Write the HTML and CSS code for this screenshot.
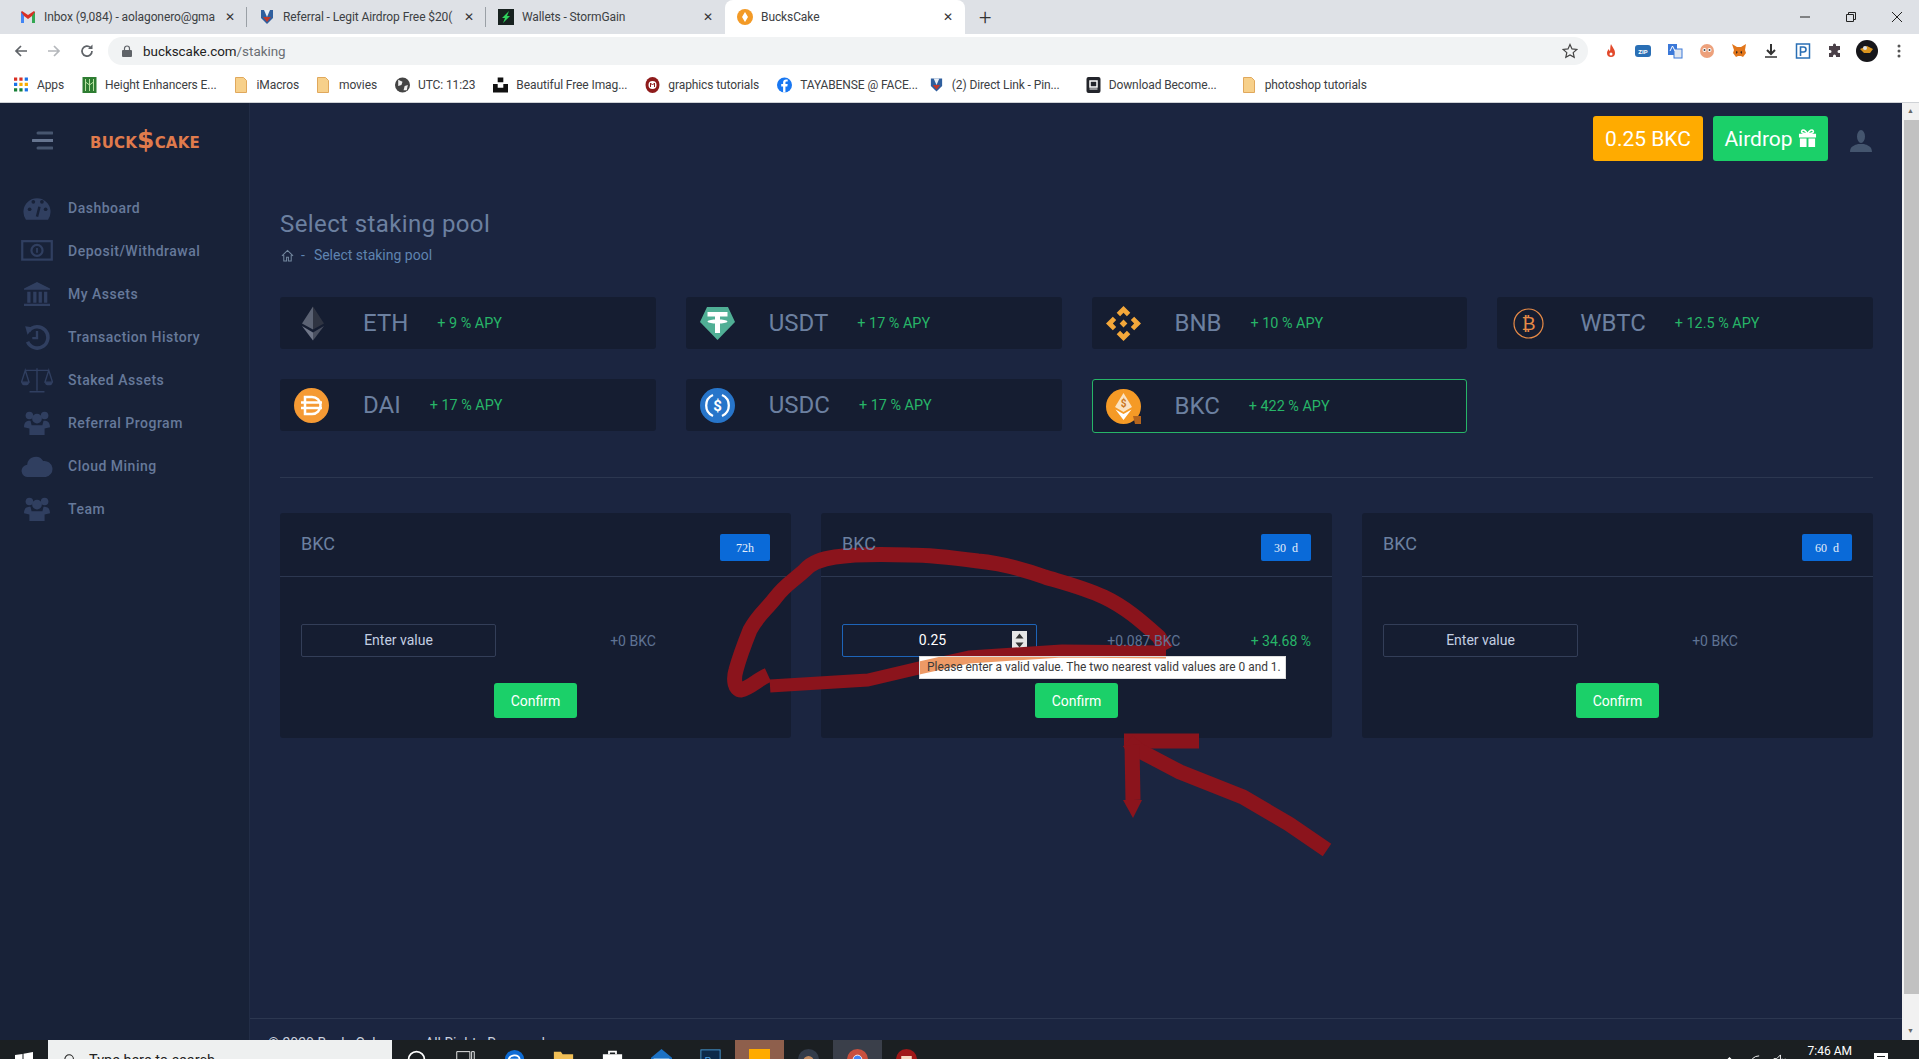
FILE: index.html
```html
<!DOCTYPE html>
<html lang="en">
<head>
    <meta charset="UTF-8">
    <title>BucksCake</title>
    <link rel="stylesheet" href="styles.css">
</head>
<body>
    <!-- browser tabs -->
    <div class="tabstrip">
        <div class="tab sep">
            <svg class="fav" viewBox="0 0 16 16"><path d="M1 3v11h3V7l4 3 4-3v7h3V3l-1-1-6 4-6-4z" fill="#d93025"/><path d="M1 3v11h3V7z" fill="#4285f4"/><path d="M12 7v7h3V3z" fill="#34a853"/></svg>
            <span class="tab-title">Inbox (9,084) - aolagonero@gma</span>
            <span class="tab-x">✕</span>
        </div>
        <div class="tab sep">
            <svg class="fav" viewBox="0 0 16 16"><path d="M2 1h12v8l-6 6-6-6z" fill="#2f5f9e"/><path d="M5 1h6L8 8z" fill="#e8eef5"/><path d="M4 8h8l-4 5z" fill="#c0392b"/></svg>
            <span class="tab-title">Referral - Legit Airdrop Free $20(</span>
            <span class="tab-x">✕</span>
        </div>
        <div class="tab">
            <svg class="fav" viewBox="0 0 16 16"><rect width="16" height="16" fill="#17211f"/><path d="M11 2 4 9h3l-2 5 7-7H9z" fill="#2fd35d"/></svg>
            <span class="tab-title">Wallets - StormGain</span>
            <span class="tab-x">✕</span>
        </div>
        <div class="tab active">
            <svg class="fav" viewBox="0 0 16 16"><circle cx="8" cy="8" r="8" fill="#f39a26"/><path d="M8 3 5 8l3 5 3-5z" fill="#fff"/></svg>
            <span class="tab-title">BucksCake</span>
            <span class="tab-x">✕</span>
        </div>
        <span class="newtab">+</span>
        <div class="winbtns">
            <svg viewBox="0 0 12 12"><path d="M1 6h10" stroke="#222" fill="none"/></svg>
            <svg viewBox="0 0 12 12"><path d="M1.500 3.500h7v7h-7zM3.500 3.500v-2h7v7h-2" stroke="#222" fill="none"/></svg>
            <svg viewBox="0 0 12 12"><path d="M1 1l10 10M11 1 1 11" stroke="#222" fill="none"/></svg>
        </div>
    </div>

    <!-- address bar -->
    <div class="toolbar">
        <svg class="navbtn" viewBox="0 0 16 16"><path d="M14 8H3M8 3 3 8l5 5" stroke="#5f6368" stroke-width="1.700" fill="none"/></svg>
        <svg class="navbtn" viewBox="0 0 16 16"><path d="M2 8h11M8 3l5 5-5 5" stroke="#b4b7bb" stroke-width="1.700" fill="none"/></svg>
        <svg class="navbtn" viewBox="0 0 16 16"><path d="M13 8a5 5 0 1 1-1.500-3.500" stroke="#5f6368" stroke-width="1.700" fill="none"/><path d="M13.500 1.500v4.500H9z" fill="#5f6368"/></svg>
        <div class="omnibox">
            <svg class="lock" viewBox="0 0 10 12"><path d="M2.500 5V3.500a2.500 2.500 0 0 1 5 0V5" stroke="#5f6368" fill="none" stroke-width="1.200"/><rect y="5" width="10" height="7" rx="1" fill="#5f6368"/></svg>
            <span class="url">buckscake.com<span class="url-path">/staking</span></span>
            <svg class="star" viewBox="0 0 16 16"><path d="m8 1.500 2 4.400 4.800.5-3.600 3.200 1 4.700L8 11.900l-4.200 2.400 1-4.700-3.600-3.200 4.800-.5z" stroke="#444" stroke-width="1.200" fill="none"/></svg>
        </div>
        <div class="exts">
            <svg viewBox="0 0 16 16"><path d="M8 1c1 3 4 5 4 9a4 4 0 0 1-8 0c0-2 1-3 2-4 0 1 .5 2 1 2 .5-2 0-4 1-7z" fill="#e2492b"/><circle cx="8" cy="11" r="1.500" fill="#fff"/></svg>
            <svg viewBox="0 0 16 16"><rect y="2" width="16" height="12" rx="3" fill="#2a6fb5"/><text x="8" y="10.500" class="ext-text">ZIP</text></svg>
            <svg viewBox="0 0 16 16"><rect x="1" y="1" width="9" height="11" fill="#3b78d8"/><rect x="7" y="6" width="8" height="9" fill="#dfe6f0" stroke="#3b78d8"/><path d="M3 8l2.500-5L8 8" stroke="#fff" fill="none"/></svg>
            <svg viewBox="0 0 16 16"><circle cx="8" cy="8" r="7" fill="#eda17c"/><circle cx="5.500" cy="7" r="2" fill="#fff"/><circle cx="10.500" cy="7" r="2" fill="#fff"/><circle cx="5.500" cy="7" r="1" fill="#444"/><circle cx="10.500" cy="7" r="1" fill="#444"/></svg>
            <svg viewBox="0 0 16 16"><path d="M1 1l5 3h4l5-3-1 6 1 3-3 4-2-1H7l-2 1-3-4 1-3z" fill="#e2761b"/><path d="M5 8l2 1-2 2zM11 8 9 9l2 2z" fill="#3a2a20"/></svg>
            <svg viewBox="0 0 16 16"><path d="M8 1v10M4 7l4 4 4-4" stroke="#333" stroke-width="2" fill="none"/><path d="M2 14h12" stroke="#333" stroke-width="1.500"/></svg>
            <svg viewBox="0 0 16 16"><rect x="1.500" y="1" width="13" height="14" fill="#fff" stroke="#2a6fb5" stroke-width="1.500"/><path d="M5.500 13V4h3a2 2 0 0 1 0 5h-3" stroke="#2a6fb5" stroke-width="1.600" fill="none"/></svg>
            <svg viewBox="0 0 16 16"><path d="M6 2a1.500 1.500 0 0 1 3 0v1h4v4h-1a1.500 1.500 0 0 0 0 3h1v4H9v-1a1.500 1.500 0 0 0-3 0v1H2v-4h1a1.500 1.500 0 0 0 0-3H2V3h4z" fill="#4a4048"/></svg>
            <svg class="avatar" viewBox="0 0 22 22"><circle cx="11" cy="11" r="11" fill="#16161a"/><path d="M4 9l7-3 6 3-3 4H8z" fill="#d9941f"/><circle cx="9" cy="8" r="2" fill="#dfe3e8"/></svg>
            <svg viewBox="0 0 16 16"><circle cx="8" cy="3" r="1.500" fill="#555"/><circle cx="8" cy="8" r="1.500" fill="#555"/><circle cx="8" cy="13" r="1.500" fill="#555"/></svg>
        </div>
    </div>

    <!-- bookmarks -->
    <div class="bookmarks">
        <div class="bm">
            <svg class="bm-ico" viewBox="0 0 14 14"><path d="M0 0h3v3H0zM5 0h3v3H5z" fill="#d93025"/><path d="M10 0h3v3h-3zM0 5h3v3H0z" fill="#1a73e8"/><path d="M5 5h3v3H5zM10 5h3v3h-3z" fill="#f9ab00"/><path d="M0 10h3v3H0zM5 10h3v3H5z" fill="#188038"/><path d="M10 10h3v3h-3z" fill="#1a73e8"/></svg>
            <span>Apps</span>
        </div>
        <div class="bm">
            <svg class="bm-ico" viewBox="0 0 14 16"><rect width="14" height="16" fill="#2e7d32"/><path d="M3 2v12M7 2v12M11 2v12M3 5l4 3 4-3" stroke="#b7e1a1" fill="none"/></svg>
            <span>Height Enhancers E...</span>
        </div>
        <div class="bm">
            <svg class="bm-folder" viewBox="0 0 12 16"><path d="M.500.500h8l3 3v12H.500z" fill="#f7d08a" stroke="#e0a85c"/></svg>
            <span>iMacros</span>
        </div>
        <div class="bm">
            <svg class="bm-folder" viewBox="0 0 12 16"><path d="M.500.500h8l3 3v12H.500z" fill="#f7d08a" stroke="#e0a85c"/></svg>
            <span>movies</span>
        </div>
        <div class="bm">
            <svg class="bm-ico" viewBox="0 0 14 14"><circle cx="7" cy="7" r="7" fill="#444"/><path d="M3 2l4 2-1 3-3 1zM9 8l3-1-1 5-3 0z" fill="#eee"/></svg>
            <span>UTC: 11:23</span>
        </div>
        <div class="bm">
            <svg class="bm-ico" viewBox="0 0 16 16"><path d="M5 0h6v5H5zM0 7h5v4h6V7h5v9H0z" fill="#111"/></svg>
            <span>Beautiful Free Imag...</span>
        </div>
        <div class="bm">
            <svg class="bm-ico" viewBox="0 0 14 16"><ellipse cx="7" cy="8" rx="7" ry="8" fill="#8e1b1b"/><circle cx="7" cy="8" r="4" fill="#fff"/><path d="M5 10V6l2 2 2-2v4" stroke="#8e1b1b" fill="none"/></svg>
            <span>graphics tutorials</span>
        </div>
        <div class="bm bm-fb">
            <svg class="bm-ico" viewBox="0 0 16 16"><circle cx="8" cy="8" r="8" fill="#1877f2"/><path d="M9 16V9.500h2l.4-2.500H9V5.500c0-.8.300-1.200 1.200-1.200h1.200V2.200C11 2.100 10.300 2 9.700 2 7.800 2 6.500 3.100 6.500 5.200V7H4.500v2.500h2V16z" fill="#fff"/></svg>
            <span>TAYABENSE @ FACE...</span>
        </div>
        <div class="bm bm-wide">
            <svg class="bm-ico" viewBox="0 0 16 16"><path d="M2 1h12v8l-6 6-6-6z" fill="#2f5f9e"/><path d="M5 1h6L8 8z" fill="#e8eef5"/><path d="M4 8h8l-4 5z" fill="#c0392b"/></svg>
            <span>(2) Direct Link - Pin...</span>
        </div>
        <div class="bm bm-wide">
            <svg class="bm-ico" viewBox="0 0 14 16"><rect width="14" height="16" rx="2" fill="#23252b"/><rect x="3.500" y="4" width="7" height="6" fill="none" stroke="#fff" stroke-width="1.500"/><path d="M3 12h8" stroke="#fff"/></svg>
            <span>Download Become...</span>
        </div>
        <div class="bm">
            <svg class="bm-folder" viewBox="0 0 12 16"><path d="M.500.500h8l3 3v12H.500z" fill="#f7d08a" stroke="#e0a85c"/></svg>
            <span>photoshop tutorials</span>
        </div>
    </div>

    <div class="page">
        <!-- left menu -->
        <aside class="sidebar">
            <div class="brand">
                <svg class="burger" viewBox="0 0 21 19"><path d="M6 2h14M6 17h14" stroke="#47566f" stroke-width="3" stroke-linecap="round"/><path d="M1 9.500h20" stroke="#66758f" stroke-width="3" stroke-linecap="round"/></svg>
                <div class="logo">BUCK<span class="logo-s">$</span>CAKE</div>
            </div>
            <nav class="menu">
                <a class="menu-item">
                    <svg viewBox="0 0 26 20"><path d="M4 19.500a11 11 0 1 1 18 0z" fill="#303f60"/><circle cx="7" cy="11" r="1.500" fill="#182238"/><circle cx="10" cy="5" r="1.500" fill="#182238"/><circle cx="17" cy="5" r="1.500" fill="#182238"/><circle cx="20" cy="11" r="1.500" fill="#182238"/><path d="M13 17l2-8" stroke="#182238" stroke-width="2"/></svg>
                    Dashboard
                </a>
                <a class="menu-item">
                    <svg viewBox="0 0 26 18"><rect x="1" y="1" width="24" height="15" fill="none" stroke="#303f60" stroke-width="1.800"/><circle cx="13" cy="8.500" r="4.500" fill="none" stroke="#303f60" stroke-width="1.800"/><path d="M13 6.500v4" stroke="#303f60" stroke-width="1.500"/></svg>
                    Deposit/Withdrawal
                </a>
                <a class="menu-item">
                    <svg viewBox="0 0 26 24"><path d="M13 1 25 7v1H1V7zM1 21h24v2H1zM4 10h3v10H4zM9.500 10h3v10h-3zM14.500 10h3v10h-3zM19.500 10h3v10h-3z" fill="#303f60"/></svg>
                    My Assets
                </a>
                <a class="menu-item">
                    <svg viewBox="0 0 22 22"><path d="M4 6a9 9 0 1 1-1 9" fill="none" stroke="#303f60" stroke-width="3"/><path d="M1 2l7 1-5 6z" fill="#303f60"/><path d="M11 6v6H7" fill="none" stroke="#303f60" stroke-width="2"/></svg>
                    Transaction History
                </a>
                <a class="menu-item">
                    <svg viewBox="0 0 30 24"><path d="M15 1v21M8 23h14M4 3h22M4 3 0.500 14h7zM26 3l-3.500 11h7z" fill="none" stroke="#303f60" stroke-width="1.300"/><path d="M0.500 14a3.500 3 0 0 0 7 0zM22.500 14a3.500 3 0 0 0 7 0z" fill="#303f60"/></svg>
                    Staked Assets
                </a>
                <a class="menu-item">
                    <svg viewBox="0 0 26 24"><circle cx="6" cy="5" r="3.500" fill="#303f60"/><circle cx="20" cy="5" r="3.500" fill="#303f60"/><circle cx="13" cy="8" r="4.500" fill="#303f60"/><path d="M1 16c0-6 4-6 6-6l1 4h10l1-4c2 0 6 0 6 6l-5 1v6H6v-6z" fill="#303f60"/></svg>
                    Referral Program
                </a>
                <a class="menu-item">
                    <svg viewBox="0 0 26 20"><path d="M6 19a5 5 0 0 1-1-10 7 7 0 0 1 13-3 6 6 0 0 1 2 13z" fill="#303f60"/></svg>
                    Cloud Mining
                </a>
                <a class="menu-item">
                    <svg viewBox="0 0 26 24"><circle cx="6" cy="5" r="3.500" fill="#303f60"/><circle cx="20" cy="5" r="3.500" fill="#303f60"/><circle cx="13" cy="8" r="4.500" fill="#303f60"/><path d="M1 16c0-6 4-6 6-6l1 4h10l1-4c2 0 6 0 6 6l-5 1v6H6v-6z" fill="#303f60"/></svg>
                    Team
                </a>
            </nav>
        </aside>

        <main class="main">
            <header class="topbar">
                <button class="btn-balance">0.25 BKC</button>
                <button class="btn-airdrop">Airdrop
                    <svg viewBox="0 0 20 20"><path d="M1 5h18v4H1zM2 10h7v9H2zM11 10h7v9h-7z" fill="#fff"/><path d="M10 5C8 1 5 0 4 2s2 3 6 3c4 0 7-1 6-3s-4-1-6 3z" fill="none" stroke="#fff" stroke-width="1.600"/></svg>
                </button>
                <svg class="user" viewBox="0 0 22 22"><ellipse cx="11" cy="6.500" rx="4" ry="6.500" fill="#44556e"/><path d="M0 22c0-6 5-7 8-8h6c3 1 8 2 8 8z" fill="#44556e"/></svg>
            </header>

            <div class="content">
                <h1 class="page-title">Select staking pool</h1>
                <div class="crumbs">
                    <svg viewBox="0 0 14 14"><path d="M1 7.500 7 1.500l6 6M3 6.500v6.500h3V9h2v4h3V6.500" fill="none" stroke="#74889f" stroke-width="1.100"/></svg>
                    <span class="crumb-dash">-</span>
                    <span>Select staking pool</span>
                </div>

                <div class="coins">
                    <div class="coin">
                        <div class="coin-ico">
                            <svg class="ico-eth" viewBox="0 0 22 34"><path d="M11 0 0 17l11 6z" fill="#5b6273"/><path d="M11 0l11 17-11 6z" fill="#2f3442"/><path d="M0 19.500 11 34V26z" fill="#6f7688"/><path d="M22 19.500 11 34V26z" fill="#4a5060"/></svg>
                        </div>
                        <span class="coin-name">ETH</span>
                        <span class="coin-apy">+ 9 % APY</span>
                    </div>
                    <div class="coin">
                        <div class="coin-ico">
                            <svg viewBox="0 0 35 33"><path d="M7 0h21l7 15-17.500 18L0 15z" fill="#50af95"/><path d="M7.500 5h20v4.500h-7.500v3c4 .2 7.500 1 7.500 2s-3.500 1.800-7.500 2V26h-5v-9.500c-4-.2-7.500-1-7.500-2s3.500-1.800 7.500-2v-3h-7.500z" fill="#fff"/></svg>
                        </div>
                        <span class="coin-name">USDT</span>
                        <span class="coin-apy">+ 17 % APY</span>
                    </div>
                    <div class="coin">
                        <div class="coin-ico">
                            <svg viewBox="0 0 36 36"><path d="M18 0l7 7-3.500 3.500L18 7l-3.500 3.500L11 7zM7 11l3.500 3.500L7 18l3.500 3.500L7 25 0 18zM29 11l7 7-7 7-3.500-3.500L29 18l-3.500-3.500zM18 14l4 4-4 4-4-4zM18 29l3.500-3.500L25 29l-7 7-7-7 3.500-3.500z" fill="#f3a73a"/></svg>
                        </div>
                        <span class="coin-name">BNB</span>
                        <span class="coin-apy">+ 10 % APY</span>
                    </div>
                    <div class="coin">
                        <div class="coin-ico">
                            <svg class="ico-btc" viewBox="0 0 31 31"><circle cx="15.500" cy="15.500" r="14.500" fill="none" stroke="#e88b47" stroke-width="1.200"/><text x="15.500" y="22" class="btc-glyph">₿</text></svg>
                        </div>
                        <span class="coin-name">WBTC</span>
                        <span class="coin-apy">+ 12.5 % APY</span>
                    </div>
                    <div class="coin">
                        <div class="coin-ico">
                            <svg viewBox="0 0 35 35"><circle cx="17.500" cy="17.500" r="17.500" fill="#f59a34"/><path d="M11 9h7a8.500 8.500 0 0 1 0 17h-7zM7 14.500h21M7 20h21" fill="none" stroke="#fff" stroke-width="2.500"/></svg>
                        </div>
                        <span class="coin-name">DAI</span>
                        <span class="coin-apy">+ 17 % APY</span>
                    </div>
                    <div class="coin">
                        <div class="coin-ico">
                            <svg viewBox="0 0 35 35"><circle cx="17.500" cy="17.500" r="17.500" fill="#2775ca"/><path d="M13 7a11.500 11.500 0 0 0 0 21M22 7a11.500 11.500 0 0 1 0 21" fill="none" stroke="#fff" stroke-width="2.300"/><text x="17.500" y="23" class="usdc-glyph">$</text></svg>
                        </div>
                        <span class="coin-name">USDC</span>
                        <span class="coin-apy">+ 17 % APY</span>
                    </div>
                    <div class="coin selected">
                        <div class="coin-ico">
                            <svg viewBox="0 0 35 35"><circle cx="17.500" cy="17.500" r="17.500" fill="#f59a26"/><path d="M17.500 4 9 18l8.500 5 8.500-5z" fill="#fbe3c2"/><path d="M9.500 20.500l8 10.500 8-10.500-8 4.500z" fill="#fff"/><text x="17.500" y="18" class="bkc-glyph">$</text><path d="M27 27h8v8h-6z" fill="#b5651d"/></svg>
                        </div>
                        <span class="coin-name">BKC</span>
                        <span class="coin-apy">+ 422 % APY</span>
                    </div>
                </div>

                <hr class="divider">

                <div class="stakes">
                    <div class="stake">
                        <div class="stake-head">
                            <span class="stake-name">BKC</span>
                            <span class="badge">72h</span>
                        </div>
                        <div class="stake-body">
                            <div class="stake-row">
                                <div class="amount">Enter value</div>
                                <span class="reward">+0 BKC</span>
                                <span class="gain"></span>
                            </div>
                            <button class="btn-confirm">Confirm</button>
                        </div>
                    </div>
                    <div class="stake">
                        <div class="stake-head">
                            <span class="stake-name">BKC</span>
                            <span class="badge">30&nbsp; d</span>
                        </div>
                        <div class="stake-body">
                            <div class="stake-row">
                                <div class="amount focused">
                                    0.25
                                    <span class="spinner">
                                        <svg viewBox="0 0 15 19"><path d="M7.500 2.500l4 5h-8zM7.500 16.500l-4-5h8z" fill="#333"/></svg>
                                    </span>
                                </div>
                                <span class="reward">+0.087 BKC</span>
                                <span class="gain">+ 34.68 %</span>
                            </div>
                            <button class="btn-confirm">Confirm</button>
                        </div>
                    </div>
                    <div class="stake">
                        <div class="stake-head">
                            <span class="stake-name">BKC</span>
                            <span class="badge">60&nbsp; d</span>
                        </div>
                        <div class="stake-body">
                            <div class="stake-row">
                                <div class="amount">Enter value</div>
                                <span class="reward">+0 BKC</span>
                                <span class="gain"></span>
                            </div>
                            <button class="btn-confirm">Confirm</button>
                        </div>
                    </div>
                </div>
            </div>

            <footer class="foot">
                <span class="foot-copy">© 2020 BucksCake .</span><span>All Rights Reserved</span>
            </footer>
        </main>

        <div class="scrollbar">
            <span class="sb-arrow">▲</span>
            <div class="sb-thumb"></div>
            <span class="sb-arrow">▼</span>
        </div>
    </div>

    <!-- windows taskbar, cut off by the bottom of the capture -->
    <div class="taskbar">
        <div class="task-start">
            <svg viewBox="0 0 18 18"><path d="M0 3l7.500-1v7H0zM8.500 1.800 18 0v9H8.500zM0 10h7.500v7L0 16zM8.500 10H18v8l-9.500-1.500z" fill="#fff"/></svg>
        </div>
        <div class="task-search">
            <svg viewBox="0 0 14 14"><circle cx="6" cy="6" r="5" fill="none" stroke="#222" stroke-width="1.200"/><path d="M2.500 10 0 13.500" stroke="#222" stroke-width="1.200"/></svg>
            <span>Type here to search</span>
        </div>
        <div class="task-app"><svg viewBox="0 0 24 24"><circle cx="12" cy="12" r="9" fill="none" stroke="#fff" stroke-width="2"/></svg></div>
        <div class="task-app"><svg viewBox="0 0 24 24"><path d="M2 3h15v12H2zM19 3h3v12h-3zM2 18h15v3H2z" fill="none" stroke="#fff"/></svg></div>
        <div class="task-app"><svg viewBox="0 0 24 24"><circle cx="12" cy="12" r="11" fill="#0f6cd4"/><path d="M5 13c1-7 12-8 13-1H8c1 5 7 5 10 3" fill="none" stroke="#fff" stroke-width="2"/></svg></div>
        <div class="task-app"><svg viewBox="0 0 24 24"><path d="M1 3h8l2 3h12v16H1z" fill="#f1bf56"/></svg></div>
        <div class="task-app"><svg viewBox="0 0 24 24"><path d="M8 6V3h8v3" fill="none" stroke="#fff" stroke-width="2"/><path d="M1 6h22v17H1z" fill="#fff"/></svg></div>
        <div class="task-app"><svg viewBox="0 0 24 24"><path d="M12 0 24 10v14H0V10z" fill="#1c71c4"/><path d="M3 11h18v6H3z" fill="#fff"/></svg></div>
        <div class="task-app"><svg viewBox="0 0 24 24"><rect x="1" y="1" width="22" height="22" fill="#0d2a4a" stroke="#4a9fe0"/><text x="12" y="18" class="ps-text">Ps</text></svg></div>
        <div class="task-app running"><svg viewBox="0 0 24 24"><rect width="24" height="24" fill="#ffab00"/></svg></div>
        <div class="task-app"><svg viewBox="0 0 24 24"><circle cx="12" cy="12" r="12" fill="#333c4a"/><circle cx="12" cy="14" r="6" fill="#c08a60"/></svg></div>
        <div class="task-app hover"><svg viewBox="0 0 24 24"><circle cx="12" cy="12" r="12" fill="#c9513f"/><path d="M12 12 1 18a12 12 0 0 0 12 6z" fill="#34a853"/><circle cx="12" cy="12" r="5" fill="#4285f4" stroke="#fff"/></svg></div>
        <div class="task-app"><svg viewBox="0 0 24 24"><circle cx="12" cy="12" r="12" fill="#a01818"/><path d="M6 8h12v10l-6 4-6-4z" fill="#f4d8c0"/></svg></div>
        <div class="tray">
            <svg class="tray-ico" viewBox="0 0 10 6"><path d="M1 5l4-4 4 4" stroke="#fff" fill="none"/></svg>
            <svg class="tray-ico" viewBox="0 0 14 14"><path d="M12 2A10 10 0 0 0 2 12M12 6a6 6 0 0 0-6 6" stroke="#fff" fill="none"/></svg>
            <svg class="tray-ico" viewBox="0 0 14 14"><path d="M1 5h3l4-4v12l-4-4H1z" fill="none" stroke="#fff"/><path d="M10 5l3 4M13 5l-3 4" stroke="#fff"/></svg>
            <div class="clock">7:46 AM</div>
            <div class="notify"><span></span><span></span></div>
        </div>
    </div>

    <!-- red marker scribbles drawn over the capture -->
    <svg class="scribble" viewBox="0 0 1919 1059">
        <path class="ink" d="M1166 650 1159 637C1140 620 1125 607 1104 597 1085 588 1065 583 1045 577 1020 568 1000 563 978 561 955 558 930 555 910 555 880 554 855 554 835 557 822 559 812 562 805 570 793 581 785 585 776 597 766 610 758 615 750 630 744 645 740 655 736 670 733 680 735 690 741 690 750 688 757 680 768 675"/>
        <path class="ink ink-band" d="M770 686 868 680 919 668 969 657 1062 651 1166 652"/>
        <path class="ink" d="M1124 741H1199"/>
        <path class="ink" d="M1128 741 1138 750 1180 772 1243 797 1289 824 1327 850"/>
        <path class="ink" d="M1132 745 1133 800"/>
        <path class="ink-tip" d="M1123 800H1142L1133 818z"/>
    </svg>

    <!-- browser validation bubble, above the scribble -->
    <div class="bubble">
        <svg class="bubble-mark" viewBox="919 656 367 23"><path class="ink-orange" d="M770 686 868 680 919 668 969 657 1062 651 1166 652"/></svg>
        <span class="bubble-text">Please enter a valid value. The two nearest valid values are 0 and 1.</span>
    </div>
</body>
</html>
```

FILE: styles.css
```css
:root {
    --page-bg: #1b2540;
    --side-bg: #182238;
    --card-bg: #151d31;
    --line: #2c3750;
    --muted: #6c80a0;
    --green: #1bd069;
    --apy: #27b568;
}

* {
    box-sizing: border-box;
}

html, body {
    margin: 0;
    height: 100%;
}

body {
    position: relative;
    height: 1059px;
    overflow: hidden;
    display: flex;
    flex-direction: column;
    font-family: Roboto, "Liberation Sans", sans-serif;
    background: var(--page-bg);
}

/* browser tabs */
.tabstrip {
    height: 34px;
    flex: none;
    display: flex;
    align-items: center;
    padding-left: 8px;
    background: #dee1e6;
    font-size: 12px;
    letter-spacing: -0.1px;
    color: #3c4043;
}

.tab {
    width: 239px;
    height: 34px;
    display: flex;
    align-items: center;
    padding: 0 10px 0 12px;
}

.tab.sep {
    background: linear-gradient(#9aa0a6, #9aa0a6) right center / 1px 20px no-repeat;
}

.tab.active {
    background: #fff;
    border-radius: 8px 8px 0 0;
    width: 240px;
}

.fav {
    width: 16px;
    height: 16px;
    flex: none;
    margin-right: 8px;
}

.tab-title {
    flex: 1;
    overflow: hidden;
    white-space: nowrap;
    margin-right: 6px;
}

.tab-x {
    font-size: 12px;
    width: 12px;
    flex: none;
    color: #333;
}

.newtab {
    margin-left: 14px;
    font-size: 22px;
    font-weight: 300;
    color: #333;
}

.winbtns {
    margin-left: auto;
    display: flex;
    gap: 34px;
    padding-right: 16px;
}

.winbtns svg {
    width: 12px;
    height: 12px;
}

/* address bar */
.toolbar {
    height: 34px;
    flex: none;
    display: flex;
    align-items: center;
    padding-left: 13px;
    background: #fff;
}

.navbtn {
    width: 16px;
    height: 16px;
    margin-right: 17px;
}

.omnibox {
    width: 1480px;
    height: 28px;
    margin-left: -4px;
    display: flex;
    align-items: center;
    padding: 0 10px 0 14px;
    border-radius: 14px;
    background: #f1f3f4;
}

.lock {
    width: 10px;
    height: 12px;
    margin-right: 11px;
}

.url {
    flex: 1;
    font-size: 13.400px;
    color: #222;
}

.url-path {
    color: #6a6e73;
}

.star {
    width: 16px;
    height: 16px;
}

.exts {
    display: flex;
    align-items: center;
    gap: 16px;
    margin-left: 15px;
}

.exts svg {
    width: 16px;
    height: 16px;
}

.exts .avatar {
    width: 22px;
    height: 22px;
    margin: 0 -3px;
}

.ext-text {
    font-size: 6px;
    font-weight: 700;
    fill: #fff;
    text-anchor: middle;
}

/* bookmarks */
.bookmarks {
    height: 35px;
    flex: none;
    display: flex;
    align-items: center;
    padding-left: 14px;
    background: #fff;
    border-bottom: 1px solid #cfd2d6;
    font-size: 12px;
    letter-spacing: -0.1px;
    color: #3c4043;
}

.bm {
    display: flex;
    align-items: center;
    white-space: nowrap;
    gap: 8px;
    margin-right: 18px;
}

.bm-fb {
    margin-right: 11px;
}

.bm-wide {
    margin-right: 26px;
}

.bm-ico {
    width: 15px;
    height: 16px;
    flex: none;
}

.bm-folder {
    width: 12px;
    height: 16px;
    flex: none;
    margin-right: 2px;
}

/* page */
.page {
    flex: 1;
    min-height: 0;
    display: flex;
}

.sidebar {
    width: 250px;
    flex: none;
    background: var(--side-bg);
    border-right: 1px solid #222d46;
}

.brand {
    height: 83px;
    display: flex;
    align-items: center;
    padding: 0 0 8px 32px;
}

.burger {
    width: 21px;
    height: 19px;
    margin-right: 37px;
}

.logo {
    font-family: "DejaVu Sans", sans-serif;
    font-size: 15px;
    font-weight: 700;
    color: #e07b4c;
    letter-spacing: 0.2px;
}

.logo-s {
    font-size: 25px;
    line-height: 20px;
}

.menu-item {
    height: 43px;
    display: flex;
    align-items: center;
    padding-left: 21px;
    font-size: 14px;
    font-weight: 500;
    letter-spacing: 0.5px;
    color: #66799a;
}

.menu-item svg {
    width: 32px;
    height: 26px;
    margin-right: 15px;
    flex: none;
}

.main {
    flex: 1;
    min-width: 0;
    display: flex;
    flex-direction: column;
    overflow: hidden;
}

.topbar {
    flex: none;
    height: 106px;
    display: flex;
    align-items: flex-start;
    justify-content: flex-end;
    padding: 13px 30px 0 0;
}

.topbar button {
    height: 45px;
    border: 0;
    border-radius: 3px;
    font-family: inherit;
    font-size: 21px;
    color: #fff;
}

.btn-balance {
    width: 110px;
    margin-right: 10px;
    background: #ffab00;
}

.btn-airdrop {
    width: 115px;
    display: flex;
    align-items: center;
    justify-content: center;
    gap: 5px;
    background: var(--green);
}

.btn-airdrop svg {
    width: 19px;
    height: 19px;
}

.user {
    width: 22px;
    height: 22px;
    margin: 14px 0 0 22px;
}

.content {
    padding: 0 29px 0 30px;
}

.page-title {
    margin: 0;
    font-size: 24px;
    font-weight: 400;
    line-height: 30px;
    letter-spacing: 0.4px;
    color: #6c80a0;
}

.crumbs {
    display: flex;
    align-items: center;
    gap: 7px;
    margin-top: 7px;
    font-size: 14px;
    line-height: 18px;
    color: #5f84b0;
}

.crumbs svg {
    width: 13px;
    height: 13px;
    margin-left: 1px;
}

.crumb-dash {
    margin-right: 2px;
}

/* coin picker */
.coins {
    display: grid;
    grid-template-columns: repeat(4, 1fr);
    gap: 30px;
    margin-top: 33px;
}

.coin {
    height: 52px;
    display: flex;
    align-items: center;
    padding-left: 14px;
    border-radius: 3px;
    background: var(--card-bg);
}

.coin.selected {
    height: 54px;
    border: 1px solid var(--apy);
    padding-left: 13px;
}

.coin-ico {
    width: 35px;
    height: 35px;
    margin-right: 34px;
    flex: none;
    display: flex;
    justify-content: center;
}

.coin-ico svg {
    width: 35px;
    height: 35px;
}

.coin-ico .ico-eth {
    width: 22px;
    margin-left: 3px;
}

.coin-ico .ico-btc {
    width: 31px;
    height: 31px;
    margin-top: 2px;
}

.btc-glyph {
    font-family: "DejaVu Sans", sans-serif;
    font-size: 19px;
    fill: #e88b47;
    text-anchor: middle;
}

.usdc-glyph, .bkc-glyph {
    font-size: 15px;
    font-weight: 700;
    fill: #fff;
    text-anchor: middle;
}

.bkc-glyph {
    font-size: 10px;
    fill: #c9761c;
}

.coin-name {
    margin-right: 29px;
    font-size: 24px;
    color: #6c80a0;
}

.coin-apy {
    font-size: 14.400px;
    color: var(--apy);
}

.divider {
    height: 1px;
    margin: 44px 0 35px;
    border: 0;
    background: var(--line);
}

/* staking periods */
.stakes {
    display: grid;
    grid-template-columns: repeat(3, 1fr);
    gap: 30px;
}

.stake {
    height: 225px;
    border-radius: 3px;
    background: var(--card-bg);
}

.stake-head {
    height: 64px;
    display: flex;
    align-items: flex-start;
    justify-content: space-between;
    padding: 20px 21px 0;
    border-bottom: 1px solid var(--line);
}

/* these two stay readable through the marker ink */
.stake-name, .reward {
    position: relative;
    z-index: 1;
}

.stake-name {
    font-size: 18px;
    color: #6c80a0;
}

.badge {
    width: 50px;
    height: 27px;
    margin-top: 1px;
    border-radius: 2px;
    background: #0a6ad8;
    font-family: "Liberation Serif", serif;
    font-size: 12px;
    line-height: 28px;
    text-align: center;
    color: #e4eefa;
}

.stake-body {
    padding: 47px 21px 0;
    text-align: center;
}

.stake-row {
    display: flex;
    align-items: center;
    justify-content: space-between;
}

.amount {
    position: relative;
    width: 195px;
    height: 33px;
    flex: none;
    border: 1px solid #333e58;
    border-radius: 2px;
    font-size: 14px;
    line-height: 31px;
    text-align: center;
    color: #c3cfe2;
}

.amount.focused {
    border-color: #1d64b8;
    color: #fff;
    padding-right: 14px;
}

.spinner {
    position: absolute;
    top: 6px;
    right: 9px;
    width: 15px;
    height: 19px;
    background: #e6e6e6;
}

.spinner svg {
    display: block;
    width: 15px;
    height: 19px;
}

.reward {
    font-size: 14px;
    color: #5f7394;
}

.gain {
    font-size: 14px;
    color: var(--apy);
}

.btn-confirm {
    width: 83px;
    height: 35px;
    margin-top: 26px;
    border: 0;
    border-radius: 3px;
    background: var(--green);
    font-family: inherit;
    font-size: 14px;
    color: #fff;
}

.foot {
    flex: none;
    height: 22px;
    margin-top: auto;
    padding: 14px 0 0 18px;
    border-top: 1px solid var(--line);
    font-size: 14px;
    line-height: 20px;
    white-space: nowrap;
    color: #c9d1de;
}

.foot-copy {
    display: inline-block;
    width: 157px;
}

/* scrollbar */
.scrollbar {
    width: 17px;
    flex: none;
    display: flex;
    flex-direction: column;
    background: #f1f1f1;
}

.sb-arrow {
    height: 17px;
    font-size: 7px;
    line-height: 17px;
    text-align: center;
    color: #666;
}

.sb-thumb {
    height: 874px;
    margin-left: 2px;
    background: #c1c1c1;
}

.sb-thumb + .sb-arrow {
    margin-top: auto;
}

/* taskbar */
.taskbar {
    height: 19px;
    flex: none;
    display: flex;
    overflow: hidden;
    background: #1b1f22;
}

.task-start {
    width: 48px;
    padding: 12px 0 0 15px;
}

.task-start svg {
    width: 18px;
    height: 18px;
}

.task-search {
    width: 344px;
    height: 40px;
    display: flex;
    align-items: flex-start;
    gap: 13px;
    padding: 12px 0 0 16px;
    background: #eef0f0;
    font-size: 14.500px;
    line-height: 18px;
    color: #222;
}

.task-search svg {
    width: 12px;
    height: 14px;
    margin-top: 1px;
}

.task-app {
    width: 49px;
    height: 40px;
    flex: none;
    display: flex;
    justify-content: center;
    padding-top: 9px;
}

.task-app svg {
    width: 21px;
    height: 21px;
}

.task-app.running {
    background: #8e5f4c;
}

.task-app.hover {
    background: #3a3f4a;
}

.ps-text {
    font-size: 12px;
    fill: #4a9fe0;
    text-anchor: middle;
}

.tray {
    margin-left: auto;
    display: flex;
    align-items: flex-start;
    gap: 12px;
    padding-right: 31px;
}

.tray-ico {
    width: 13px;
    height: 13px;
    margin-top: 14px;
}

.clock {
    margin: 3px 0 0 10px;
    font-size: 12px;
    line-height: 16px;
    color: #fff;
}

.notify {
    width: 14px;
    height: 20px;
    margin: 13px 0 0 10px;
    padding: 3px;
    background: #fff;
}

.notify span {
    display: block;
    height: 1px;
    margin-bottom: 2px;
    background: #1b1f22;
}

/* marker scribbles */
.scribble {
    position: absolute;
    top: 0;
    left: 0;
    width: 1919px;
    height: 1059px;
    pointer-events: none;
}

.ink {
    fill: none;
    stroke: #8b141c;
    stroke-width: 15;
    stroke-linejoin: round;
}

.ink-band {
    stroke-width: 13;
}

.ink-tip {
    fill: #8b141c;
}

/* validation bubble */
.bubble {
    position: absolute;
    top: 656px;
    left: 919px;
    width: 367px;
    height: 23px;
    overflow: hidden;
    background: #fff;
    border: 1px solid #ddd;
    font-size: 11.900px;
    line-height: 21px;
    padding-left: 7px;
    color: #3a3a3a;
}

.bubble-mark {
    position: absolute;
    top: -1px;
    left: -1px;
    width: 367px;
    height: 23px;
}

.ink-orange {
    fill: none;
    stroke: #ee9a66;
    stroke-width: 13;
}

.bubble-text {
    position: relative;
    white-space: nowrap;
}
```
